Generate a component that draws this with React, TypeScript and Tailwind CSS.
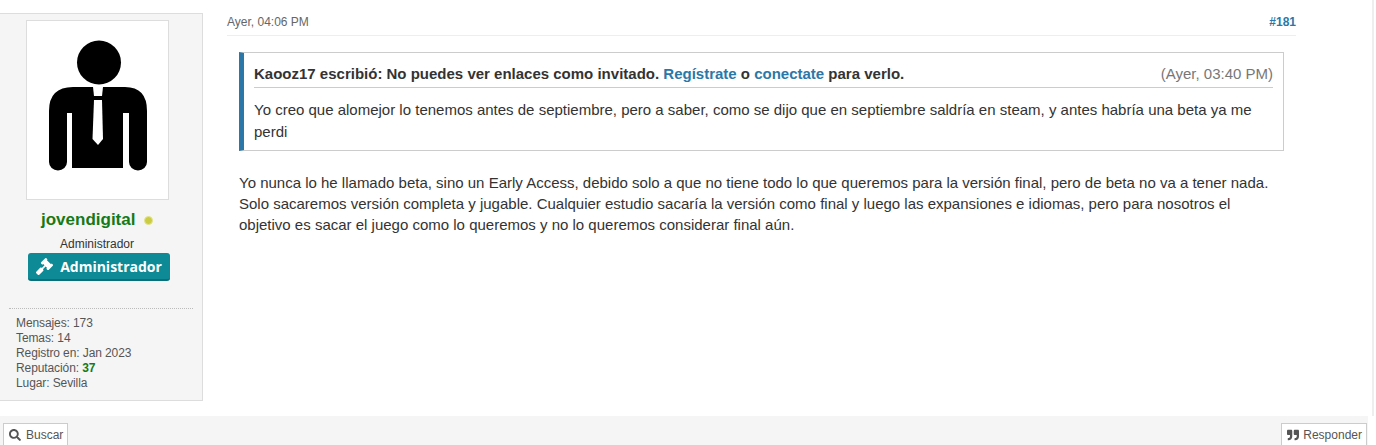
import { FaGavel, FaQuoteRight, FaSearch } from "react-icons/fa";

function Avatar() {
  return (
    <svg viewBox="0 0 141 178" className="block w-full h-full">
      <circle cx="72" cy="41.5" r="22" fill="#000" />
      <path
        d="M46 66 H98 Q120 66 120 90 V141 A9 8.5 0 0 1 102 141 V92 H96 V147 H45 V92 H40 V141 A9 8.5 0 0 1 22 141 V90 Q22 66 46 66 Z"
        fill="#000"
      />
      <path d="M66 66 H76 L75 75 H67 Z" fill="#fff" />
      <path d="M67 79 H75 L76 118 L71 124 L65.5 118 Z" fill="#fff" />
    </svg>
  );
}

function Sidebar() {
  return (
    <aside className="w-[203px] shrink-0 h-[388px] mt-[13px] bg-[#f5f5f5] border-t border-r border-b border-[#dddddd] flex flex-col">
      <div className="ml-[26px] mt-[6px] w-[143px] h-[180px] bg-white border border-[#dddddd]">
        <Avatar />
      </div>
      <div className="mt-[10px] ml-[41px] flex items-center h-[20px]">
        <span className="text-[17px] font-bold text-[#157a15]">jovendigital</span>
        <span className="ml-[9px] w-[9px] h-[9px] rounded-full bg-[#cccc44] border border-[#e4e48c]" />
      </div>
      <div className="mt-[6px] text-center pr-[8px] text-[12px] leading-[16px] text-[#333333]">Administrador</div>
      <div className="ml-[28px] mt-[1px] w-[142px] h-[28px] rounded-[3px] bg-[#0d8a96] border-b-2 border-[#0a6f79] flex items-center justify-center gap-[7px] text-white text-[14px] font-bold font-['Open_Sans',sans-serif]">
        <FaGavel className="w-[17px] h-[17px]" />
        <span>Administrador</span>
      </div>
      <div className="mt-[27px] mx-[9px] border-t border-dotted border-[#bbbbbb]" />
      <div className="mt-[7px] ml-[16px] text-[12px] leading-[15px] tracking-[-0.1px] text-[#555555]">
        <div>Mensajes: 173</div>
        <div>Temas: 14</div>
        <div>Registro en: Jan 2023</div>
        <div>
          Reputación: <span className="font-bold text-[#157a15]">37</span>
        </div>
        <div>Lugar: Sevilla</div>
      </div>
    </aside>
  );
}

function Post() {
  return (
    <main className="ml-[24px] w-[1069px] shrink-0">
      <div className="h-[36px] border-b border-[#eeeeee] flex items-start justify-between pt-[15px] text-[12px] leading-[15px]">
        <span className="text-[#666666]">Ayer, 04:06 PM</span>
        <a className="font-bold text-[#2b78a8]">#181</a>
      </div>
      <blockquote className="mt-[16px] ml-[12px] w-[1045px] h-[99px] border border-l-[5px] border-[#cccccc] border-l-[#2b78a8] px-[10px] pt-[8px]">
        <div className="h-[27px] border-b border-[#cccccc] flex items-start justify-between text-[15px] leading-[26px]">
          <span className="font-bold text-[#333333]">
            Kaooz17 escribió: No puedes ver enlaces como invitado.{" "}
            <a className="text-[#2b78a8]">Regístrate</a> o <a className="text-[#2b78a8]">conectate</a> para verlo.
          </span>
          <span className="text-[#777777]">(Ayer, 03:40 PM)</span>
        </div>
        <p className="mt-[11px] text-[15px] leading-[22px] text-[#333333]">
          Yo creo que alomejor lo tenemos antes de septiembre, pero a saber, como se dijo que en septiembre saldría en
          steam, y antes habría una beta ya me perdi
        </p>
      </blockquote>
      <p className="mt-[21px] ml-[12px] w-[1045px] text-[15px] leading-[21px] text-[#333333]">
        Yo nunca lo he llamado beta, sino un Early Access, debido solo a que no tiene todo lo que queremos para la
        versión final, pero de beta no va a tener nada. Solo sacaremos versión completa y jugable. Cualquier estudio
        sacaría la versión como final y luego las expansiones e idiomas, pero para nosotros el objetivo es sacar el juego
        como lo queremos y no lo queremos considerar final aún.
      </p>
    </main>
  );
}

export default function App() {
  return (
    <div className="w-[1376px] h-[445px] overflow-hidden bg-white font-['Liberation_Sans',Arial,sans-serif] flex flex-col">
      <div className="flex h-[416px] shrink-0 border-r-2 border-[#eeeeee] mr-[2px]">
        <Sidebar />
        <Post />
      </div>
      <footer className="h-[29px] w-[1368px] bg-[#f5f5f5] flex justify-between items-end pl-[3px] pr-[1px] text-[12px] text-[#555555]">
        <div className="h-[22px] pl-[5px] pr-[4px] bg-white border border-b-0 border-[#cccccc] flex items-center gap-[5px]">
          <FaSearch className="w-[12px] h-[12px]" />
          <span>Buscar</span>
        </div>
        <div className="h-[22px] pl-[5px] pr-[4px] bg-white border border-b-0 border-[#cccccc] flex items-center gap-[4px]">
          <FaQuoteRight className="w-[12px] h-[12px]" />
          <span>Responder</span>
        </div>
      </footer>
    </div>
  );
}
